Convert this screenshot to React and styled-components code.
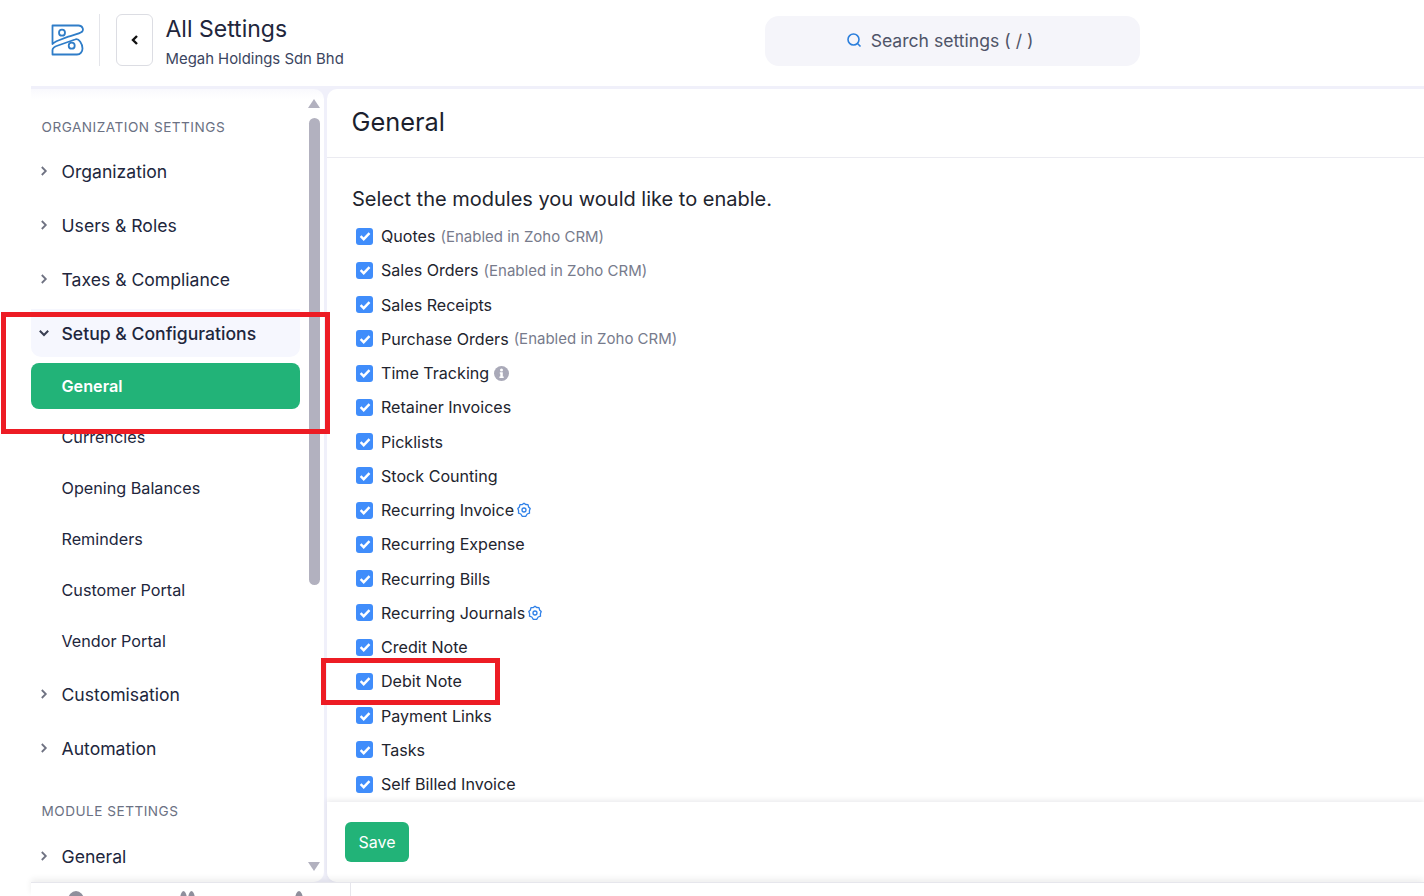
import React from 'react';
import styled, { createGlobalStyle } from 'styled-components';

const Global = createGlobalStyle`
  html, body { margin: 0; padding: 0; height: 100%; overflow: hidden; background: #fff; }
  body { font-family: Inter, "Liberation Sans", sans-serif; color: #21263c; }
  * { box-sizing: border-box; }
`;

const Page = styled.div`
  position: relative;
  width: 1424px;
  height: 896px;
  overflow: hidden;
  background: #fff;
  display: flex;
  flex-direction: column;
`;
const Header = styled.header`
  height: 86px;
  flex: none;
  display: flex;
  align-items: flex-start;
  padding: 14px 0 0 51px;
`;
const LogoCell = styled.div`
  width: 49px;
  height: 52px;
  border-right: 1px solid #e4e5ea;
  padding-top: 10px;
`;
const BackButton = styled.button`
  width: 37px;
  height: 52px;
  margin-left: 16px;
  padding: 0;
  background: #fff;
  border: 1px solid #dcdde3;
  border-radius: 6px;
  display: flex;
  align-items: center;
  justify-content: center;
`;
const TitleBlock = styled.div`
  margin-left: 12.5px;
  width: 599.5px;
`;
const Title = styled.div`
  font-size: 23px;
  line-height: 30px;
  font-weight: 400;
  color: #21263c;
`;
const Subtitle = styled.div`
  font-size: 14.9px;
  line-height: 20px;
  margin-top: 5px;
  color: #3b4560;
`;
const Search = styled.div`
  width: 375px;
  height: 50px;
  margin-top: 2px;
  padding: 0 26px 2px 0;
  border-radius: 14px;
  background: #f5f5fa;
  display: flex;
  align-items: center;
  justify-content: center;
  gap: 9px;
  color: #4f5468;
  font-size: 17.6px;
`;
const Body = styled.div`
  flex: 1;
  min-height: 0;
  margin-left: 31px;
  background: #f0f0fa;
  padding-top: 3px;
  display: flex;
  gap: 3px;
`;
const Sidebar = styled.aside`
  width: 293px;
  height: 793px;
  flex: none;
  background: linear-gradient(#f9f9fd, #fff 10px);
  border-radius: 0 10px 10px 0;
  position: relative;
  overflow: hidden;
  padding: 0 24px 0 0;
`;
const Section = styled.div`
  font-size: 13.6px;
  line-height: 18px;
  letter-spacing: 0.5px;
  color: #6b7183;
  padding-left: 10.5px;
  margin-top: ${p => p.$top}px;
  margin-bottom: ${p => p.$bottom}px;
`;
const NavItem = styled.div`
  height: 48px;
  margin-bottom: 6px;
  display: flex;
  align-items: center;
  padding-left: 30.5px;
  position: relative;
  font-size: 17.6px;
  font-weight: ${p => (p.$open ? 500 : 400)};
  color: #21263c;
  border-radius: 0 0 10px 10px;
  background: ${p => (p.$open ? '#f6f7fe' : 'transparent')};
`;
const Chevron = styled.span`
  position: absolute;
  left: 8px;
  top: 50%;
  transform: translateY(-50%);
  display: flex;
`;
const SubList = styled.div`
  margin-bottom: 6px;
`;
const SubItem = styled.div`
  height: 46px;
  margin-bottom: 5px;
  display: flex;
  align-items: center;
  padding-left: 30.5px;
  font-size: 16.2px;
  border-radius: 8px;
  color: ${p => (p.$active ? '#fff' : '#21263c')};
  background: ${p => (p.$active ? '#22b378' : 'transparent')};
  font-weight: ${p => (p.$active ? 600 : 400)};
`;
const Track = styled.div`
  position: absolute;
  top: 0;
  bottom: 0;
  left: 277px;
  width: 12px;
`;
const Thumb = styled.div`
  position: absolute;
  left: 1px;
  top: 29px;
  width: 11px;
  height: 467px;
  border-radius: 6px;
  background: #b2b1bf;
`;
const ArrowUp = styled.div`
  position: absolute;
  left: 0;
  top: 10px;
  border-left: 6.5px solid transparent;
  border-right: 6.5px solid transparent;
  border-bottom: 9px solid #b2b1bf;
`;
const ArrowDown = styled.div`
  position: absolute;
  left: 0;
  top: 773px;
  border-left: 6.5px solid transparent;
  border-right: 6.5px solid transparent;
  border-top: 9px solid #b2b1bf;
`;
const Main = styled.main`
  flex: 1;
  min-width: 0;
  background: #fff;
  border-radius: 10px 0 0 10px;
  display: flex;
  flex-direction: column;
  height: 793px;
`;
const MainTitle = styled.h1`
  height: 69px;
  flex: none;
  margin: 0;
  padding: 0 0 3px 24.5px;
  display: flex;
  align-items: center;
  border-bottom: 1px solid #ebebf1;
  font-size: 25.4px;
  font-weight: 400;
  color: #1c1f2e;
`;
const Content = styled.div`
  flex: 1;
  min-height: 0;
  overflow: hidden;
  padding: 28px 0 0 25px;
`;
const Lead = styled.div`
  font-size: 20px;
  line-height: 26px;
  color: #21242e;
  margin-bottom: 7px;
`;
const Row = styled.label`
  height: 34.25px;
  display: flex;
  align-items: center;
  padding-left: 4px;
  font-size: 16.1px;
  color: #22242e;
`;
const Check = styled.span`
  width: 17px;
  height: 17px;
  flex: none;
  margin-right: 8px;
  border-radius: 3px;
  background: #408dfb;
  display: flex;
  align-items: center;
  justify-content: center;
`;
const Note = styled.span`
  color: #777b8c;
  margin-left: 5px;
  font-size: 15px;
`;
const IconSlot = styled.span`
  display: flex;
  margin-left: ${p => p.$gap}px;
`;
const Footer = styled.div`
  height: 80px;
  flex: none;
  padding: 20px 0 0 18px;
  background: #fff;
  border-radius: 0 0 0 10px;
  box-shadow: 0 -2px 5px rgba(40, 40, 70, 0.09);
  position: relative;
`;
const SaveButton = styled.button`
  width: 64px;
  height: 40px;
  border: 0;
  border-radius: 6px;
  background: #22b378;
  color: #fff;
  font-family: inherit;
  font-size: 16px;
`;
const Strip = styled.div`
  position: absolute;
  left: 31px;
  right: 0;
  top: 882px;
  height: 14px;
  background: #fff;
  border-top: 1px solid #e6e6ec;
  box-shadow: 0 -3px 6px rgba(0, 0, 0, 0.07);
  display: flex;
`;
const StripMenu = styled.div`
  width: 320px;
  height: 14px;
  flex: none;
  border-right: 1px solid #e6e6ec;
  position: relative;
  overflow: hidden;
`;
const StripIcon = styled.span`
  position: absolute;
  left: ${p => p.$x}px;
  top: 8px;
  width: ${p => p.$w}px;
  height: 18px;
  border-radius: 50%;
  background: #8f8f9c;
`;
const Highlight = styled.div`
  position: absolute;
  left: ${p => p.$x}px;
  top: ${p => p.$y}px;
  width: ${p => p.$w}px;
  height: ${p => p.$h}px;
  border: 5px solid #ed1c24;
  pointer-events: none;
`;

const Right = () => (
  <svg width="10" height="10" viewBox="0 0 10 10" fill="none"><path d="M2.800 1 6.800 5 2.800 9" stroke="#6f7282" strokeWidth="1.800" /></svg>
);
const Down = () => (
  <svg width="10" height="10" viewBox="0 0 10 10" fill="none"><path d="M.8 2.800 5 7l4.200-4.200" stroke="#3a3f52" strokeWidth="2" /></svg>
);
const Tick = () => (
  <svg width="14" height="14" viewBox="0 0 14 14" fill="none"><path d="M2.600 7.200 5.700 10.200 11.500 4.200" stroke="#fff" strokeWidth="2.400" /></svg>
);
const Gear = () => (
  <svg width="16" height="16" viewBox="0 0 16 16" fill="none" stroke="#2f80e8" strokeWidth="1.300">
    <path d="M8 1.200 9.700 2.500 12 2.700 12.600 5 14.200 6.500 13.400 8.800 13.500 11.200 11.200 12 9.700 14.300H6.300L4.800 12 2.500 11.200 2.600 8.800 1.800 6.500 3.400 5 4 2.700 6.300 2.500Z" strokeLinejoin="round" />
    <circle cx="8" cy="8" r="2" />
  </svg>
);
const Info = () => (
  <svg width="15" height="15" viewBox="0 0 15 15">
    <circle cx="7.500" cy="7.500" r="7.500" fill="#a9a9b8" />
    <circle cx="7.500" cy="4.100" r="1.500" fill="#fff" />
    <path d="M5.800 6.300h3v4.300h.9v1.400H5.400v-1.400h.9V7.700h-.5z" fill="#fff" />
  </svg>
);
const Logo = () => (
  <svg width="33" height="32" viewBox="0 0 33 32" fill="none" stroke="#2f7dc8" strokeWidth="1.800" strokeLinejoin="round">
    <path d="M1.500 1.500H27.500C31.500 1.500 33 5.500 31 7.800C28 10 22 11 17.300 12.700L6 17C4 18 2.500 18.500 1.500 20V1.500Z" />
    <path d="M1.500 30.500V26C1.500 23.500 4 22.500 7 21.500L24 15.500C28 13.800 31.500 20 31.500 24.500C31.500 27.500 29.500 30.500 26 30.500H1.500Z" />
    <circle cx="11" cy="8.700" r="3" />
    <circle cx="20.700" cy="21.700" r="3" />
  </svg>
);

const modules = [
  { t: 'Quotes', n: '(Enabled in Zoho CRM)' },
  { t: 'Sales Orders', n: '(Enabled in Zoho CRM)' },
  { t: 'Sales Receipts' },
  { t: 'Purchase Orders', n: '(Enabled in Zoho CRM)' },
  { t: 'Time Tracking', i: 'info' },
  { t: 'Retainer Invoices' },
  { t: 'Picklists' },
  { t: 'Stock Counting' },
  { t: 'Recurring Invoice', i: 'gear' },
  { t: 'Recurring Expense' },
  { t: 'Recurring Bills' },
  { t: 'Recurring Journals', i: 'gear' },
  { t: 'Credit Note' },
  { t: 'Debit Note' },
  { t: 'Payment Links' },
  { t: 'Tasks' },
  { t: 'Self Billed Invoice' },
];

const Nav = ({ children, open }) => (
  <NavItem $open={open}>
    <Chevron>{open ? <Down /> : <Right />}</Chevron>
    {children}
  </NavItem>
);

export default function App() {
  return (
    <Page>
      <Global />
      <Header>
        <LogoCell><Logo /></LogoCell>
        <BackButton aria-label="Back">
          <svg width="10" height="12" viewBox="0 0 10 12" fill="none"><path d="M7 2 3 6l4 4" stroke="#111" strokeWidth="2.400" /></svg>
        </BackButton>
        <TitleBlock>
          <Title>All Settings</Title>
          <Subtitle>Megah Holdings Sdn Bhd</Subtitle>
        </TitleBlock>
        <Search>
          <svg width="16" height="16" viewBox="0 0 16 16" fill="none" stroke="#2b7fdc" strokeWidth="1.600"><circle cx="7.500" cy="7.500" r="5.500" /><path d="m11.500 11.500 3 3" /></svg>
          Search settings ( / )
        </Search>
      </Header>
      <Body>
        <Sidebar>
          <Section $top={29} $bottom={11}>ORGANIZATION SETTINGS</Section>
          <Nav>Organization</Nav>
          <Nav>Users &amp; Roles</Nav>
          <Nav>Taxes &amp; Compliance</Nav>
          <Nav open>Setup &amp; Configurations</Nav>
          <SubList>
            <SubItem $active>General</SubItem>
            <SubItem>Currencies</SubItem>
            <SubItem>Opening Balances</SubItem>
            <SubItem>Reminders</SubItem>
            <SubItem>Customer Portal</SubItem>
            <SubItem>Vendor Portal</SubItem>
          </SubList>
          <Nav>Customisation</Nav>
          <Nav>Automation</Nav>
          <Section $top={30} $bottom={12}>MODULE SETTINGS</Section>
          <Nav>General</Nav>
          <Track>
            <ArrowUp />
            <Thumb />
            <ArrowDown />
          </Track>
        </Sidebar>
        <Main>
          <MainTitle>General</MainTitle>
          <Content>
            <Lead>Select the modules you would like to enable.</Lead>
            {modules.map(m => (
              <Row key={m.t}>
                <Check><Tick /></Check>
                {m.t}
                {m.n && <Note>{m.n}</Note>}
                {m.i === 'info' && <IconSlot $gap={5}><Info /></IconSlot>}
                {m.i === 'gear' && <IconSlot $gap={2}><Gear /></IconSlot>}
              </Row>
            ))}
          </Content>
          <Footer><SaveButton>Save</SaveButton></Footer>
        </Main>
      </Body>
      <Strip>
        <StripMenu>
          <StripIcon $x={37} $w={16} />
          <StripIcon $x={149} $w={7} />
          <StripIcon $x={157} $w={7} />
          <StripIcon $x={264} $w={8} />
        </StripMenu>
      </Strip>
      <Highlight $x={1} $y={312} $w={329} $h={122} />
      <Highlight $x={321} $y={658} $w={179} $h={47} />
    </Page>
  );
}
